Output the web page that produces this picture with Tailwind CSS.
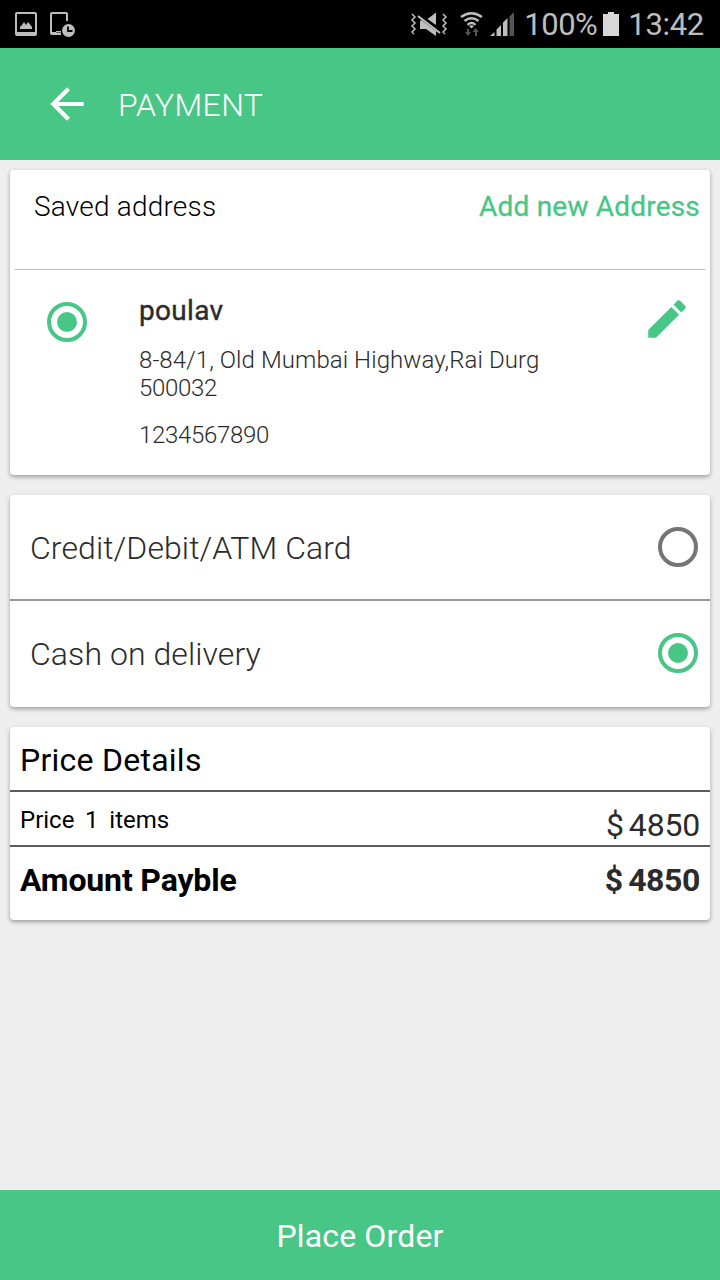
<!DOCTYPE html>
<html lang="en">

<head>
    <meta charset="UTF-8">
    <meta name="viewport" content="width=device-width, initial-scale=1.0">
    <title>Payment</title>
    <script src="https://cdn.jsdelivr.net/npm/@tailwindcss/browser@4"></script>
</head>

<body class="bg-[#eeeeee] font-['Roboto',sans-serif]">
    <div class="w-[720px] h-[1280px] flex flex-col overflow-hidden whitespace-nowrap">
        <!-- Status Bar -->
        <div class="h-12 shrink-0 bg-black flex items-center justify-between pl-[15px] pr-4 text-[#bebebe]">
            <div class="flex items-center gap-[13px]">
                <svg class="w-[22px] h-6" viewBox="0 0 22 24" fill="currentColor">
                    <path fill-rule="evenodd" d="M2 0h18a2 2 0 0 1 2 2v20a2 2 0 0 1-2 2H2a2 2 0 0 1-2-2V2a2 2 0 0 1 2-2zM2 2v18h18V2z" />
                    <path d="M5 17v-2l2-2 2-3 2 3 2-3 4 5v2z" />
                </svg>
                <svg class="w-[26px] h-[26px]" viewBox="0 0 26 26" fill="none">
                    <path d="M17 10V3q0-1-1-1H2Q1 2 1 3v19q0 1 1 1h9" stroke="currentColor" stroke-width="2" />
                    <path d="M1 21h5v3H2zM6 20h5v1.500H6z" fill="currentColor" />
                    <circle cx="18.500" cy="19.500" r="6.500" fill="currentColor" />
                    <path d="M18 15.500V20h4.500" stroke="#000" stroke-width="1.800" />
                </svg>
            </div>
            <div class="flex items-center">
                <svg class="w-[104px] h-6 mr-2.5" viewBox="0 0 104 24" fill="none">
                    <!-- mute / vibrate -->
                    <path d="M2 2l3 3-3 3 3 3-3 3 3 3-3 3 2 2M33 2l3 3-3 3 3 3-3 3 3 3-3 3 2 2" stroke="currentColor" stroke-width="1.500" />
                    <path d="M10 8.500V17h6l10 7v-5L12 8.500zM17.500 7L26 .500V13z" fill="currentColor" />
                    <path d="M8 4l22 17" stroke="currentColor" stroke-width="2.200" />
                    <!-- wifi -->
                    <path d="M51 5q10.500-7.500 21 0M54.500 9q7-5.500 14 0M57.500 12.800q4-3.500 8 0" stroke="currentColor" stroke-width="2.300" />
                    <path d="M59 14l2.500 2.500L64 14q-2.500-1.500-5 0z" fill="currentColor" />
                    <path d="M57 17h2v3h2l-3 4-3-4h2zM65 24h2v-4h2l-3.500-4-3 4H65z" fill="#555" />
                    <!-- signal -->
                    <path d="M80 24l4.500-4v4zM86.500 24v-6.500l4.500-4.500v11zM93 24V10.500L97.500 6v18z" fill="currentColor" />
                    <path d="M99.500 24V4.500L104 0v24z" fill="#555" />
                </svg>
                <span class="pt-px text-[31px] leading-8 tracking-[-0.5px]">100%</span>
                <svg class="w-4 h-6 ml-1.5 mr-[9px]" viewBox="0 0 16 24" fill="#d8d8d8">
                    <path d="M5 0h6v2h5v22H0V2h5z" />
                </svg>
                <span class="pt-px text-[31px] leading-8 tracking-[-0.3px]">13:42</span>
            </div>
        </div>

        <!-- App Bar -->
        <div class="h-28 shrink-0 bg-[#48c686] text-white flex items-center pl-[42px]">
            <svg class="w-[50px] h-[50px]" viewBox="0 0 24 24" fill="currentColor">
                <path d="M20 11H7.830l5.590-5.590L12 4l-8 8 8 8 1.410-1.410L7.830 13H20v-2z" />
            </svg>
            <h1 class="ml-[26px] pt-0.5 text-[32px] leading-9 font-light tracking-[0.4px]">PAYMENT</h1>
        </div>

        <div class="flex-1 px-2.5 pt-2.5 flex flex-col gap-5">
            <!-- Saved Address -->
            <div class="h-[305px] bg-white rounded-[4px] shadow-[0_2px_4px_rgba(0,0,0,0.35)] px-[5px]">
                <div class="h-[100px] border-b border-[#b9b9b9] flex justify-between pt-[21px] pl-[19px] pr-[5px] text-[28px] leading-8">
                    <h2 class="font-light text-black tracking-[0.2px]">Saved address</h2>
                    <a class="text-[#48c686] tracking-[0.2px] [-webkit-text-stroke:0.3px_#48c686]">Add new Address</a>
                </div>
                <div class="flex text-[#2b2b2b]">
                    <div class="w-10 h-10 mt-8 ml-8 rounded-full border-4 border-[#48c686] flex items-center justify-center">
                        <div class="w-5 h-5 rounded-full bg-[#48c686]"></div>
                    </div>
                    <div class="ml-[52px] pt-[25px]">
                        <h3 class="text-[28px] leading-8 tracking-[0.3px] [-webkit-text-stroke:0.4px_#2b2b2b]">poulav</h3>
                        <p class="mt-[19px] text-2xl leading-7 font-light tracking-[0.08px]">8-84/1, Old Mumbai Highway,Rai Durg<br><span class="tracking-[-0.3px]">500032</span></p>
                        <p class="mt-[19px] text-2xl leading-7 font-light tracking-[-0.3px]">1234567890</p>
                    </div>
                    <svg class="w-[50px] h-[50px] mt-[23.5px] ml-auto mr-[13.5px] text-[#48c686]" viewBox="0 0 24 24" fill="currentColor">
                        <path d="M3 17.250V21h3.750L17.810 9.940l-3.750-3.750L3 17.250zM20.710 7.040c.39-.39.39-1.020 0-1.410l-2.340-2.340c-.39-.39-1.020-.39-1.410 0l-1.830 1.830 3.750 3.750 1.830-1.830z" />
                    </svg>
                </div>
            </div>

            <!-- Payment Method -->
            <div class="h-[212px] bg-white rounded-[4px] shadow-[0_2px_4px_rgba(0,0,0,0.35)] text-[32px] leading-9 font-light tracking-[0.08px] text-[#2b2b2b]">
                <div class="h-[106px] border-b-2 border-[#999] flex items-center justify-between pl-5 pr-3">
                    <span class="pt-0.5">Credit/Debit/ATM Card</span>
                    <div class="w-10 h-10 rounded-full border-4 border-[#757575]"></div>
                </div>
                <div class="h-[106px] flex items-center justify-between pl-5 pr-3">
                    <span>Cash on delivery</span>
                    <div class="w-10 h-10 mb-0.5 rounded-full border-4 border-[#48c686] flex items-center justify-center">
                        <div class="w-5 h-5 rounded-full bg-[#48c686]"></div>
                    </div>
                </div>
            </div>

            <!-- Price Details -->
            <div class="h-[193px] bg-white rounded-[4px] shadow-[0_2px_4px_rgba(0,0,0,0.35)] text-[32px] leading-9 text-black">
                <h2 class="h-[65px] border-b-2 border-[#5c5c5c] px-2.5 pt-[15px] tracking-[0.25px]">Price Details</h2>
                <div class="h-[55px] border-b-2 border-[#5c5c5c] flex justify-between px-2.5">
                    <span class="pt-2.5 text-2xl leading-9 whitespace-pre [word-spacing:-0.6px]">Price  1  items</span>
                    <span class="pt-[15px] flex gap-[5px] text-[#2b2b2b]"><span>$</span><span class="tracking-[-0.2px]">4850</span></span>
                </div>
                <div class="flex justify-between px-2.5 pt-[15px] font-bold">
                    <span class="tracking-[-0.15px]">Amount Payble</span>
                    <span class="flex gap-[5px] text-[#2b2b2b]"><span>$</span><span class="tracking-[-0.4px]">4850</span></span>
                </div>
            </div>
        </div>

        <!-- Place Order -->
        <button class="h-[90px] shrink-0 bg-[#48c686] text-white text-[32px] leading-9 pt-0.5 tracking-[0.15px]">Place Order</button>
    </div>
</body>

</html>
